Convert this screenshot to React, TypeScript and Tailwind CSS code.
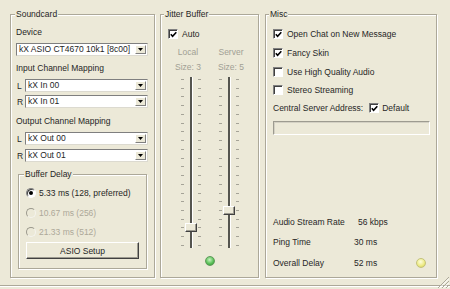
import React from 'react';

const Group = ({ label, className, labelClass, children }: { label: string; className: string; labelClass: string; children: React.ReactNode }) => (
  <div className={`relative border border-[#aca899] shadow-[1px_1px_0_#fff,inset_1px_1px_0_#fff] ${className}`}>
    <span className={`absolute top-[-6px] bg-[#ece9d8] px-[1px] leading-[10px] ${labelClass}`}>{label}</span>
    {children}
  </div>
)

const Combo = ({ value, className = "" }: { value: string; className?: string }) => (
  <div className={`flex h-[13px] items-stretch border border-t-[#7f7f7f] border-l-[#7f7f7f] border-r-[#dcdad0] border-b-[#dcdad0] bg-white ${className}`}>
    <span className="flex-1 truncate pl-[2px] leading-[11px]">{value}</span>
    <span className="m-[1px] flex w-[11px] items-center justify-center border border-t-white border-l-white border-r-[#808080] border-b-[#808080] bg-[#ece9d8]">
      <svg width="5" height="3" viewBox="0 0 5 3"><path d="M0 0h5L2.5 3z" fill="#000" /></svg>
    </span>
  </div>
)

const Mapping = ({ ch, value, className }: { ch: string; value: string; className: string }) => (
  <div className={`flex items-center ${className}`}>
    <span className="w-[9px] pl-[1px]">{ch}</span>
    <Combo className="flex-1" value={value} />
  </div>
)

const Check = ({ checked, className = "" }: { checked?: boolean; className?: string }) => (
  <span className={`flex h-[10px] w-[10px] shrink-0 items-center justify-center border border-t-[#808080] border-l-[#808080] border-r-white border-b-white bg-white shadow-[inset_1px_1px_0_#404040] ${className}`}>
    {checked && (
      <svg width="7" height="7" viewBox="0 0 7 7">
        <path d="M0.8 3.3 L2.6 5.3 L6.3 1.3" fill="none" stroke="#000" strokeWidth="1.6" />
      </svg>
    )}
  </span>
)

const CheckRow = ({ label, checked, className = "" }: { label: string; checked?: boolean; className?: string }) => (
  <div className={`flex items-center gap-[4px] ${className}`}>
    <Check checked={checked} />
    <span>{label}</span>
  </div>
)

const Radio = ({ checked, disabled }: { checked?: boolean; disabled?: boolean }) => (
  <span
    className={
      disabled
        ? "flex h-[10px] w-[10px] shrink-0 rounded-full border border-t-[#9a988c] border-l-[#9a988c] border-r-[#f4f3ee] border-b-[#f4f3ee] bg-[#ece9d8]"
        : "flex h-[10px] w-[10px] shrink-0 items-center justify-center rounded-full border border-t-[#808080] border-l-[#808080] border-r-white border-b-white bg-white shadow-[inset_1px_1px_0_#404040]"
    }
  >
    {checked && <span className="h-[4px] w-[4px] rounded-full bg-black" />}
  </span>
)

const ticks = Array.from({ length: 20 })

const Ticks = () => (
  <div className="flex flex-col justify-between py-[2px]">
    {ticks.map((_, i) => (
      <span key={i} className="h-px w-[3px] bg-[#a5a397]" />
    ))}
  </div>
)

const Slider = ({ pos }: { pos: number }) => (
  <div className="flex h-[171px] gap-[6px]">
    <Ticks />
    <div className="relative w-[2px] bg-[#55554f] shadow-[1px_0_0_#fff]">
      <span
        className="absolute left-[-5px] h-[9px] w-[12px] border border-t-white border-l-white border-r-[#404040] border-b-[#404040] bg-[#ece9d8] shadow-[inset_-1px_-1px_0_#9d9b90]"
        style={{ top: pos }}
      />
    </div>
    <Ticks />
  </div>
)

export default function App() {
  return (
    <div className="relative h-[289px] w-[450px] overflow-hidden bg-[#ece9d8] font-['Liberation_Sans',Arial,sans-serif] text-[8.5px] leading-[10px] text-[#262626]">
      <div className="flex pl-[10px] pt-[14px]">
        <Group label="Soundcard" className="h-[264px] w-[145px]" labelClass="left-[4px]">
          <div className="flex h-full flex-col pl-[5px] pr-[6px] pt-[12px]">
            <span>Device</span>
            <Combo className="mt-[6px]" value="kX ASIO CT4670 10k1 [8c00]" />
            <span className="mt-[7px]">Input Channel Mapping</span>
            <Mapping className="mt-[6px]" ch="L" value="kX In 00" />
            <Mapping className="mt-[3px]" ch="R" value="kX In 01" />
            <span className="mt-[8px]">Output Channel Mapping</span>
            <Mapping className="mt-[6px]" ch="L" value="kX Out 00" />
            <Mapping className="mt-[4px]" ch="R" value="kX Out 01" />
            <Group label="Buffer Delay" className="ml-[2px] mr-[1px] mt-[12px] h-[95px]" labelClass="left-[5px]">
              <div className="flex flex-col pl-[7px] pt-[13px]">
                <div className="flex items-center gap-[3px]">
                  <Radio checked />
                  <span>5.33 ms (128, preferred)</span>
                </div>
                <div className="mt-[10px] flex items-center gap-[3px] text-[#aca899]">
                  <Radio disabled />
                  <span>10.67 ms (256)</span>
                </div>
                <div className="mt-[9px] flex items-center gap-[3px] text-[#aca899]">
                  <Radio disabled />
                  <span>21.33 ms (512)</span>
                </div>
                <button className="mt-[5px] h-[17px] w-[113px] border border-t-white border-l-white border-r-[#404040] border-b-[#404040] bg-[#ece9d8] leading-[10px] shadow-[inset_-1px_-1px_0_#9d9b90]">
                  ASIO Setup
                </button>
              </div>
            </Group>
          </div>
        </Group>

        <Group label="Jitter Buffer" className="ml-[5px] h-[264px] w-[99px]" labelClass="left-[3px]">
          <div className="flex flex-col pt-[14px]">
            <div className="flex items-center gap-[4px] pl-[7px]">
              <Check checked />
              <span>Auto</span>
            </div>
            <div className="mt-[8px] flex gap-[3px] pl-[7px] text-[#a19f94]">
              <span className="w-[40px] text-center">Local</span>
              <span className="w-[40px] text-center">Server</span>
            </div>
            <div className="mt-[5px] flex gap-[3px] pl-[7px] text-[#a19f94]">
              <span className="w-[40px] text-center">Size: 3</span>
              <span className="w-[40px] text-center">Size: 5</span>
            </div>
            <div className="mt-[5px] flex gap-[18px] pl-[20px]">
              <Slider pos={146} />
              <Slider pos={129} />
            </div>
            <span className="mx-auto mt-[8px] h-[10px] w-[10px] rounded-full border border-[#5f9a5a] bg-[radial-gradient(circle_at_45%_35%,#c9f2c0,#5cc25a_55%,#2f8a30)]" />
          </div>
        </Group>

        <Group label="Misc" className="ml-[6px] h-[264px] w-[172px]" labelClass="left-[3px]">
          <div className="flex h-full flex-col pb-[9px] pl-[7px] pr-[6px] pt-[14px]">
            <CheckRow checked label="Open Chat on New Message" />
            <CheckRow className="mt-[9px]" checked label="Fancy Skin" />
            <CheckRow className="mt-[9px]" label="Use High Quality Audio" />
            <CheckRow className="mt-[8px]" label="Stereo Streaming" />
            <div className="mt-[8px] flex items-center">
              <span>Central Server Address:</span>
              <Check checked className="ml-[6px]" />
              <span className="ml-[3px]">Default</span>
            </div>
            <div className="mt-[8px] h-[14px] border border-t-[#9d9b90] border-l-[#9d9b90] border-r-white border-b-white bg-[#ece9d8] shadow-[inset_1px_1px_0_#d4d1c4]" />
            <div className="mt-auto flex flex-col">
              <div className="flex">
                <span className="w-[85px]">Audio Stream Rate</span>
                <span>56 kbps</span>
              </div>
              <div className="mt-[10px] flex">
                <span className="w-[81px]">Ping Time</span>
                <span>30 ms</span>
              </div>
              <div className="mt-[11px] flex items-center">
                <span className="w-[81px]">Overall Delay</span>
                <span>52 ms</span>
                <span className="ml-auto mr-[4px] h-[10px] w-[10px] rounded-full border border-[#c4c27a] bg-[radial-gradient(circle_at_45%_35%,#fdfde0,#eeec88_55%,#cfcb52)]" />
              </div>
            </div>
          </div>
        </Group>
      </div>

      <div className="mt-[7px] h-[4px] border-t border-[#aca899] bg-[#ece9d8] shadow-[inset_0_1px_0_#fff]" />

      <svg className="absolute bottom-[1px] right-[1px]" width="11" height="11" viewBox="0 0 11 11">
        <path d="M11 0L0 11M11 4L4 11M11 8L8 11" stroke="#aca899" strokeWidth="1" />
        <path d="M11 1.5L1.5 11M11 5.5L5.5 11M11 9.5L9.5 11" stroke="#fff" strokeWidth="1" />
      </svg>
    </div>
  )
}
